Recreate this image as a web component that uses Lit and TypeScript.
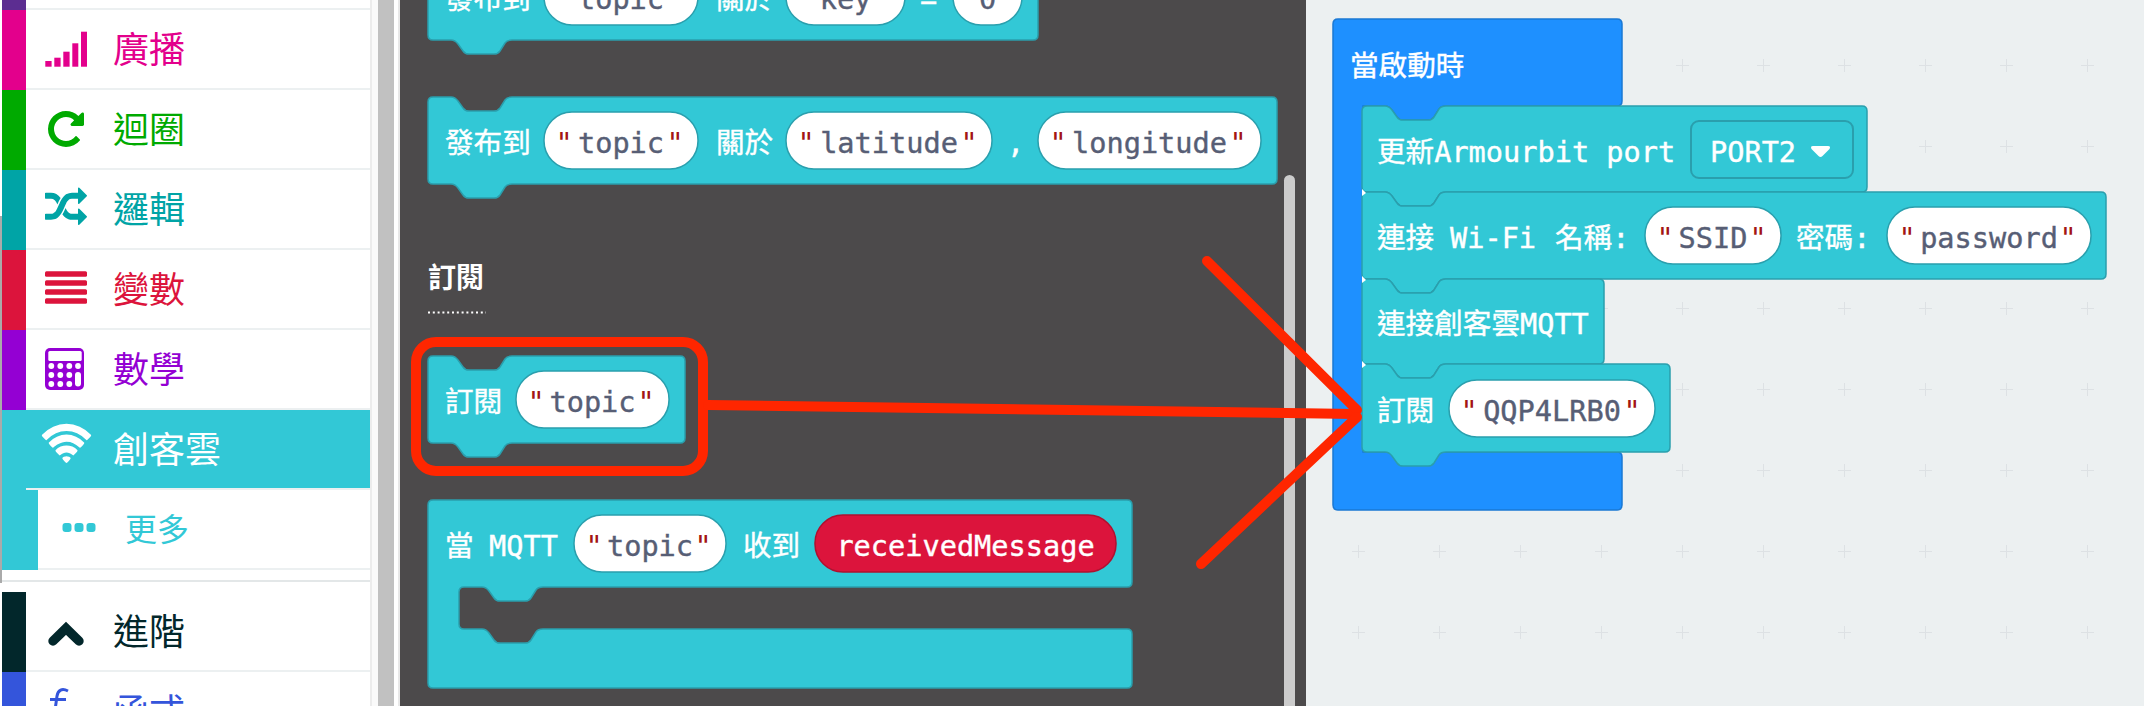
import { LitElement, css, html, svg, unsafeCSS } from 'lit'
import { customElement } from 'lit/decorators.js'

const TEAL = unsafeCSS('#32c8d6')
const TEAL_EDGE = unsafeCSS('#2a9fad')

// going right along the top edge of a block, dent goes down
const topNotch = (x: number, y: number): string =>
  `H${x + 23} Q${x + 27},${y} ${x + 30},${y + 4} L${x + 35},${y + 11} Q${x + 37},${y + 14} ${x + 41},${y + 14} ` +
  `H${x + 66} Q${x + 70},${y + 14} ${x + 72},${y + 11} L${x + 77},${y + 3} Q${x + 79},${y} ${x + 84},${y} `

// going left along the bottom edge, tab sticks out below
const bottomNotch = (x: number, y: number): string =>
  `H${x + 84} Q${x + 79},${y} ${x + 77},${y + 3} L${x + 72},${y + 11} Q${x + 70},${y + 14} ${x + 66},${y + 14} ` +
  `H${x + 41} Q${x + 37},${y + 14} ${x + 35},${y + 11} L${x + 30},${y + 4} Q${x + 27},${y} ${x + 23},${y} `

const stackBlock = (x: number, y: number, w: number, h: number): unknown => {
  const r = 5
  const d = `M${x},${y + r} Q${x},${y} ${x + r},${y} ${topNotch(x, y)}H${x + w - r} Q${x + w},${y} ${x + w},${y + r} ` +
    `V${y + h - r} Q${x + w},${y + h} ${x + w - r},${y + h} ${bottomNotch(x, y + h)}H${x + r} Q${x},${y + h} ${x},${y + h - r} Z`
  return svg`<path class="block" d=${d}></path>`
}

const label = (x: number, y: number, text: string): unknown =>
  svg`<text class="t" x=${x} y=${y}>${text}</text>`

const stringPill = (x: number, y: number, w: number, text: string): unknown => svg`
  <rect class="pill" x=${x} y=${y} width=${w} height="57" rx="28"></rect>
  <text class="t quote" x=${x + 20} y=${y + 41}>"</text>
  <text class="t ink" x=${x + w / 2} y=${y + 41} text-anchor="middle">${text}</text>
  <text class="t quote" x=${x + w - 23} y=${y + 41}>"</text>
`

const ICONS: Record<string, unknown> = {
  signal: svg`
    <rect x="2.3" y="35" width="6.3" height="5.7"></rect>
    <rect x="11.3" y="31.7" width="6.3" height="9"></rect>
    <rect x="20.3" y="25.7" width="6.3" height="15"></rect>
    <rect x="29.3" y="17.3" width="6" height="23.4"></rect>
    <rect x="38" y="5.7" width="6" height="35"></rect>`,
  loop: svg`<path transform="translate(5 5) scale(.02344) translate(-128 -128)" d="M1664 256v448q0 26-19 45t-45 19h-448q-42 0-59-40-17-39 14-69l138-138q-148-137-349-137-104 0-198.5 40.5t-163.5 109.5-109.5 163.5-40.5 198.5 40.5 198.5 109.5 163.5 163.5 109.5 198.5 40.5q119 0 225-52t179-147q7-10 23-12 15 0 25 9l137 137q9 8 9.5 20.5t-7.5 22.5q-109 132-264 204.5t-327 72.5q-156 0-298-61t-245-164-164-245-61-298 61-298 164-245 245-164 298-61q147 0 284.5 55.5t244.5 156.5l130-129q29-31 70-14 39 17 39 59z"></path>`,
  shuffle: svg`<path transform="translate(2 3) scale(.02344) translate(0 -96)" d="M666 481q-60 92-137 273-22-45-37-72.5t-40.5-63.5-51-56.5-63-35-81.5-14.5h-224q-14 0-23-9t-9-23v-192q0-14 9-23t23-9h224q250 0 410 225zm1126 799q0 14-9 23l-320 320q-9 9-23 9-13 0-22.5-9.5t-9.5-22.5v-192q-32 0-85 .5t-81 1-73-1-71-5-64-10.5-63-18.5-58-28.5-59-40-55-53.5-56-69.5q59-93 136-273 22 45 37 72.5t40.5 63.5 51 56.5 63 35 81.5 14.5h256v-192q0-14 9-23t23-9q12 0 24 10l319 319q9 9 9 23zm0-896q0 14-9 23l-320 320q-9 9-23 9-13 0-22.5-9.5t-9.5-22.5v-192h-256q-48 0-87 15t-69 45-51 61.5-45 77.5q-32 62-78 171-29 66-49.5 111t-54 105-64 100-74 83-90 68.5-106.5 42-128 16.5h-224q-14 0-23-9t-9-23v-192q0-14 9-23t23-9h224q48 0 87-15t69-45 51-61.5 45-77.5q32-62 78-171 29-66 49.5-111t54-105 64-100 74-83 90-68.5 106.5-42 128-16.5h256v-192q0-14 9-23t23-9q12 0 24 10l319 319q9 9 9 23z"></path>`,
  bars: svg`
    <rect x="2" y="5.3" width="42" height="5.4" rx="1.5"></rect>
    <rect x="2" y="14.3" width="42" height="5.4" rx="1.5"></rect>
    <rect x="2" y="23.3" width="42" height="5.4" rx="1.5"></rect>
    <rect x="2" y="32.3" width="42" height="5.4" rx="1.5"></rect>`,
  calc: svg`
    <rect x="2" y="2" width="39" height="42" rx="5"></rect>
    <g fill="#fff">
      <rect x="5.3" y="5" width="33.4" height="10" rx="1.5"></rect>
      ${[8.3, 17.3, 26.3, 35].map((cx) => svg`<circle cx=${cx} cy="20" r="2.9"></circle>`)}
      ${[8.3, 17.3, 26.3].map((cx) => svg`<circle cx=${cx} cy="29" r="2.9"></circle><circle cx=${cx} cy="38" r="2.9"></circle>`)}
      <rect x="32" y="26" width="6" height="14.5" rx="3"></rect>
    </g>`,
  wifi: svg`<path transform="translate(1 5) scale(.0251 .0281) translate(0 -384)" d="M896 1523q-20 0-93-73.5t-73-93.5q0-32 62.5-54t103.5-22 103.5 22 62.5 54q0 20-73 93.5t-93 73.5zm270-271q-2 0-40-25t-101.5-50-128.5-25-128.5 25-101 50-40.5 25q-18 0-93.5-75t-75.5-93q0-13 10-23 78-77 196-121t233-44 233 44 196 121q10 10 10 23 0 18-75.5 93t-93.5 75zm273-272q-11 0-23-8-136-105-252-154.5t-268-49.5q-85 0-170.5 22t-149 53-113.5 62-79 53-31 22q-17 0-92-75t-75-93q0-12 10-22 132-132 320-205t380-73 380 73 320 205q10 10 10 22 0 18-75 93t-92 75zm271-271q-11 0-22-9-179-157-371.5-236.5t-420.5-79.5-420.5 79.5-371.5 236.5q-11 9-22 9-17 0-92.5-75t-75.5-93q0-13 10-23 187-186 445-288t527-102 527 102 445 288q10 10 10 23 0 18-75.5 93t-92.5 75z"></path>`,
  dots: svg`
    <rect x="6.5" y="17" width="9" height="9" rx="3"></rect>
    <rect x="18.5" y="17" width="9" height="9" rx="3"></rect>
    <rect x="30.5" y="17" width="9" height="9" rx="3"></rect>`,
  chevron: svg`<polyline points="10,33 23,20.3 36,33" fill="none" stroke="currentColor" stroke-width="9.4" stroke-linecap="round"></polyline>`,
  func: svg`<path d="M25 3 C19 0 15 2 14 8 L9 44 M7 11.5 H23" fill="none" stroke="currentColor" stroke-width="3"></path>`
}

interface Row {
  name: string
  color: string
  icon?: string
}

const TOP_ROWS: Row[] = [
  { name: '', color: '#5c2d91' },
  { name: '廣播', color: '#e3008c', icon: 'signal' },
  { name: '迴圈', color: '#00aa00', icon: 'loop' },
  { name: '邏輯', color: '#00a4a6', icon: 'shuffle' },
  { name: '變數', color: '#dc143c', icon: 'bars' },
  { name: '數學', color: '#9400d3', icon: 'calc' }
]

const BOTTOM_ROWS: Row[] = [
  { name: '進階', color: '#02272b', icon: 'chevron' },
  { name: '函式', color: '#3455db', icon: 'func' }
]

@customElement('app-root')
export class AppRoot extends LitElement {
  static styles = css`
    :host {
      display: flex;
      width: 2144px;
      height: 706px;
      overflow: hidden;
      position: relative;
      background: #fff;
      font-family: "Noto Sans CJK TC", "Noto Sans", sans-serif;
    }

    .gutter {
      flex: none;
      width: 2px;
      background: linear-gradient(#fff 216px, #aaa 216px, #aaa 583px, #fff 583px);
    }

    .toolbox {
      flex: none;
      width: 368px;
      margin-top: -70px;
      background: #fff;
      border-right: 2px solid #ececec;
      box-sizing: content-box;
    }

    .row {
      display: flex;
      height: 80px;
    }

    .bar {
      flex: none;
      width: 24px;
    }

    .row-body {
      flex: 1;
      display: flex;
      align-items: center;
      border-bottom: 2px solid #ecf0f1;
    }

    .icon {
      flex: none;
      width: 80px;
      display: flex;
      justify-content: center;
    }

    .icon svg {
      width: 46px;
      height: 46px;
      fill: currentColor;
      display: block;
      overflow: visible;
    }

    .name {
      padding-left: 7px;
      padding-bottom: 5px;
      font-size: 36px;
      line-height: 46px;
    }

    .row.active {
      background: ${TEAL};
      color: #fff;
    }

    .row.sub .bar {
      width: 36px;
      background: ${TEAL};
    }

    .row.sub {
      color: ${TEAL};
    }

    .row.sub .icon {
      width: 81px;
    }

    .row.sub .name {
      padding-left: 6px;
      font-size: 32px;
    }

    .divider {
      height: 2px;
      margin: 10px 0;
      background: #e3e7e8;
    }

    .track {
      flex: none;
      display: flex;
      width: 28px;
      background: #fafafa;
    }

    .track-thumb {
      width: 16px;
      margin-left: 6px;
      background: #c1c1c1;
    }

    .track-end {
      width: 4px;
      background: #fff;
      border-right: 2px solid #e8e8e8;
    }

    .flyout {
      flex: none;
      width: 906px;
      height: 706px;
      background: #4c4a4b;
    }

    .workspace {
      flex: 1;
      height: 706px;
      background: #ecf0f1;
    }

    .flyout svg, .workspace svg {
      display: block;
      width: 100%;
      height: 100%;
    }

    .block {
      fill: ${TEAL};
      stroke: ${TEAL_EDGE};
      stroke-width: 1.5;
    }

    .hat {
      fill: #1e90ff;
      stroke: #1a78d4;
      stroke-width: 1.5;
    }

    .pill {
      fill: #fff;
      stroke: ${TEAL_EDGE};
      stroke-width: 1.5;
    }

    .pill.var {
      fill: #dc143c;
      stroke: #b0102f;
    }

    .field {
      fill: ${TEAL};
      stroke: ${TEAL_EDGE};
      stroke-width: 2;
    }

    .t {
      font-family: "DejaVu Sans Mono", "Noto Sans CJK TC", monospace;
      font-size: 28.6px;
      fill: #fff;
      stroke: #fff;
      stroke-width: 0.4;
    }

    .t.ink {
      fill: #575e75;
      stroke: #575e75;
    }

    .t.quote {
      fill: #a31515;
      stroke: none;
      text-anchor: middle;
    }

    .heading {
      font-family: "Noto Sans CJK TC", sans-serif;
      font-size: 28px;
      font-weight: 700;
      fill: #fff;
    }

    .dots-line {
      stroke: #fff;
      stroke-width: 2;
      stroke-dasharray: 2 2.8;
    }

    .thumb {
      fill: #ccc;
    }

    .plus {
      stroke: #dde1e4;
      stroke-width: 1;
    }

    .notes {
      position: absolute;
      left: 0;
      top: 0;
      width: 2144px;
      height: 706px;
      pointer-events: none;
    }

    .notes * {
      fill: none;
      stroke: #ff2600;
      stroke-width: 10;
      stroke-linecap: round;
    }
  `

  renderRow (row: Row): unknown {
    return html`
      <div class="row" style="color: ${row.color}">
        <div class="bar" style="background: ${row.color}"></div>
        <div class="row-body">
          ${row.icon !== undefined
            ? html`<div class="icon"><svg viewBox="0 0 46 46">${ICONS[row.icon]}</svg></div>`
            : ''}
          ${row.name !== '' ? html`<div class="name">${row.name}</div>` : ''}
        </div>
      </div>
    `
  }

  renderFlyout (): unknown {
    const x = 428
    // statement block, the C shape under the MQTT header
    const mqtt = `M${x},505 Q${x},500 ${x + 5},500 H1127 Q1132,500 1132,505 V582 Q1132,587 1127,587 ${bottomNotch(459, 587)}` +
      `H464 Q459,587 459,592 V624 Q459,629 464,629 ${topNotch(459, 629)}H1127 Q1132,629 1132,634 V683 Q1132,688 1127,688 H${x + 5} Q${x},688 ${x},683 Z`

    return svg`
      ${stackBlock(x, -47, 610, 87)}
      ${label(445, 9, '發布到')}
      ${stringPill(544, -32, 154, 'topic')}
      ${label(716, 9, '關於')}
      ${stringPill(786, -32, 119, 'key')}
      ${label(920, 9, '=')}
      <rect class="pill" x="953" y="-32" width="69" height="57" rx="28"></rect>
      <text class="t ink" x="987.5" y="9" text-anchor="middle">0</text>

      ${stackBlock(x, 97, 849, 87)}
      ${label(445, 153, '發布到')}
      ${stringPill(544, 112, 154, 'topic')}
      ${label(716, 153, '關於')}
      ${stringPill(786, 112, 206, 'latitude')}
      ${label(1007, 153, ',')}
      ${stringPill(1038, 112, 223, 'longitude')}

      <text class="heading" x="428" y="288">訂閱</text>
      <line class="dots-line" x1="428" y1="312.5" x2="486" y2="312.5"></line>

      ${stackBlock(x, 356, 257, 87)}
      ${label(445, 412, '訂閱')}
      ${stringPill(516, 371, 153, 'topic')}

      <path class="block" d=${mqtt}></path>
      ${label(445, 556, '當')}
      ${label(489, 556, 'MQTT')}
      ${stringPill(574, 515, 152, 'topic')}
      ${label(743, 556, '收到')}
      <rect class="pill var" x="815" y="515" width="301" height="57" rx="28"></rect>
      <text class="t" x="965.5" y="556" text-anchor="middle">receivedMessage</text>

      <rect class="thumb" x="1284" y="175" width="11" height="560" rx="5.5"></rect>
    `
  }

  renderWorkspace (): unknown {
    const x = 1362
    const hat = `M1333,24 Q1333,19 1338,19 H1617 Q1622,19 1622,24 V101 Q1622,106 1617,106 ${bottomNotch(x, 106)}H1363 V452 H1617 Q1622,452 1622,457 V505 Q1622,510 1617,510 H1338 Q1333,510 1333,505 Z`
    const chip = (y: number): unknown => svg`<polygon points="${x},${y - 3} ${x + 4},${y + 1} ${x},${y + 4}" fill="#fff"></polygon>`

    return svg`
      <defs>
        <pattern id="plus" patternUnits="userSpaceOnUse" x="1318" y="25" width="81" height="81">
          <path class="plus" d="M40.5 34 V47 M34 40.5 H47"></path>
        </pattern>
      </defs>
      <rect x="1306" y="0" width="838" height="706" fill="url(#plus)"></rect>

      <path class="hat" d=${hat}></path>
      ${label(1350, 76, '當啟動時')}

      ${stackBlock(x, 106, 505, 86)}
      ${label(1377, 162, '更新Armourbit port')}
      <rect class="field" x="1691" y="121" width="162" height="57" rx="8"></rect>
      ${label(1710, 162, 'PORT2')}
      <path d="M1813,146 H1828 Q1831,146 1829.5,149 L1822.5,156 Q1820.5,158 1818.5,156 L1811.5,149 Q1810,146 1813,146 Z" fill="#fff"></path>

      ${stackBlock(x, 192, 744, 87)}
      ${label(1377, 248, '連接')}
      ${label(1450, 248, 'Wi-Fi')}
      ${label(1555, 248, '名稱:')}
      ${stringPill(1645, 207, 136, 'SSID')}
      ${label(1796, 248, '密碼:')}
      ${stringPill(1887, 207, 204, 'password')}

      ${stackBlock(x, 279, 242, 85)}
      ${label(1377, 334, '連接創客雲MQTT')}

      ${stackBlock(x, 364, 308, 88)}
      ${label(1377, 421, '訂閱')}
      ${stringPill(1449, 380, 206, 'QQP4LRB0')}

      ${chip(192)}
      ${chip(279)}
      ${chip(364)}
    `
  }

  render (): unknown {
    return html`
      <div class="gutter"></div>
      <div class="toolbox">
        ${TOP_ROWS.map((row) => this.renderRow(row))}
        <div class="row active">
          <div class="bar"></div>
          <div class="row-body">
            <div class="icon"><svg viewBox="0 0 46 46">${ICONS.wifi}</svg></div>
            <div class="name">創客雲</div>
          </div>
        </div>
        <div class="row sub">
          <div class="bar"></div>
          <div class="row-body">
            <div class="icon"><svg viewBox="0 0 46 46">${ICONS.dots}</svg></div>
            <div class="name">更多</div>
          </div>
        </div>
        <div class="divider"></div>
        ${BOTTOM_ROWS.map((row) => this.renderRow(row))}
      </div>
      <div class="track">
        <div class="track-thumb"></div>
        <div class="track-end"></div>
      </div>
      <div class="flyout">
        <svg viewBox="400 0 906 706">${this.renderFlyout()}</svg>
      </div>
      <div class="workspace">
        <svg viewBox="1306 0 838 706">${this.renderWorkspace()}</svg>
      </div>
      <svg class="notes" viewBox="0 0 2144 706">
        <rect x="416" y="342" width="287" height="129" rx="20"></rect>
        <line x1="708" y1="405" x2="1355" y2="414"></line>
        <line x1="1207" y1="261" x2="1357" y2="410"></line>
        <line x1="1201" y1="564" x2="1357" y2="417"></line>
      </svg>
    `
  }
}
